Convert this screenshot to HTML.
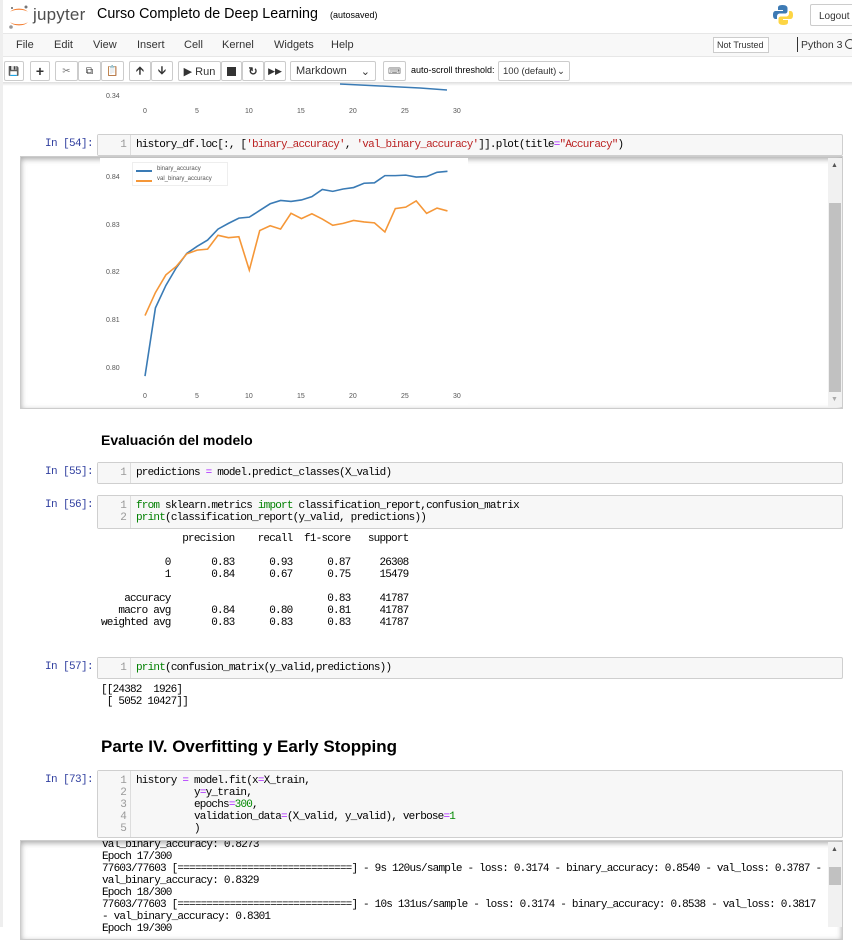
<!DOCTYPE html>
<html><head><meta charset="utf-8"><style>
*{box-sizing:border-box;margin:0;padding:0}
body{width:852px;height:927px;overflow:hidden;background:#fff;font-family:"Liberation Sans",Arial,sans-serif;position:relative;color:#000}
.a{position:absolute}
.mono{font-family:"Liberation Mono",monospace;font-size:11px;letter-spacing:-0.8px;white-space:pre;line-height:12px}
.btn{position:absolute;top:61px;height:20px;border:1px solid #ccc;background:#fff;border-radius:2px;font-size:11px;display:flex;align-items:center;justify-content:center;color:#333;white-space:nowrap}
.menu span{position:absolute;top:39px;font-size:11px;color:#333}
.prompt{position:absolute;left:30px;width:63px;text-align:right;color:#303f9f;font-family:"Liberation Mono",monospace;font-size:11px;letter-spacing:-0.6px}
.inbox{position:absolute;left:97px;width:746px;background:#f7f7f7;border:1px solid #cfcfcf;border-radius:2px}
.gut{position:absolute;left:0;top:0;bottom:0;width:33px;border-right:1px solid #ddd;background:#f7f7f7;color:#999;text-align:right;padding-right:4px;padding-top:4px}
.code{position:absolute;left:38px;top:4px;color:#000}
.k{color:#008000}.o{color:#aa22ff}.s{color:#ba2121}.n{color:#080}
.tick{position:absolute;font-size:7px;color:#555}
</style></head><body>
<div class="a" style="left:0;top:0;width:3px;height:927px;background:#eee"></div>
<svg class="a" style="left:7px;top:4px" width="24" height="26" viewBox="0 0 24 26">
<path d="M3 8 A10 6 0 0 1 21 8 A10 4 0 0 0 3 8Z" fill="#f37726"/>
<path d="M3 18 A10 6 0 0 0 21 18 A10 4 0 0 1 3 18Z" fill="#f37726"/>
<circle cx="19" cy="3" r="1.5" fill="#767677"/><circle cx="4" cy="23" r="1.8" fill="#989798"/><circle cx="5" cy="4" r="1" fill="#616262"/>
</svg>
<div class="a" style="left:33px;top:5px;font-size:17px;color:#4e4e4e;letter-spacing:0.2px">jupyter</div>
<div class="a" style="left:97px;top:6px;font-size:14.3px;color:#000">Curso Completo de Deep Learning</div>
<div class="a" style="left:330px;top:10px;font-size:9px;color:#000">(autosaved)</div>
<svg class="a" style="left:772px;top:4px" width="22" height="22" viewBox="0 0 22 22">
<path d="M10.5 1C6 1 6 3 6 4v2h5v1H3.5C1.5 7 1 9 1 11s.5 4 2.5 4H5v-2.5C5 10.5 6.5 9.5 8 9.5h5c1.5 0 2.5-1 2.5-2.5V4c0-1.5-1.5-3-5-3z" fill="#3d7ab4"/>
<path d="M11.5 21c4.5 0 4.5-2 4.5-3v-2h-5v-1h7.5c2 0 2.5-2 2.5-4s-.5-4-2.5-4H17v2.5c0 2-1.5 3-3 3H9c-1.5 0-2.5 1-2.5 2.5V18c0 1.5 1.5 3 5 3z" fill="#fdd544"/>
</svg>
<div class="a" style="left:810px;top:4px;width:46px;height:22px;border:1px solid #ccc;border-radius:2px;font-size:10px;padding:6px 0 0 8px;color:#333">Logout</div>
<div class="a" style="left:3px;top:33px;width:849px;height:24px;background:#f8f8f8;border-top:1px solid #e7e7e7;border-bottom:1px solid #e7e7e7"></div>
<div class="menu"><span style="left:16px">File</span><span style="left:54px">Edit</span><span style="left:93px">View</span><span style="left:137px">Insert</span><span style="left:184px">Cell</span><span style="left:222px">Kernel</span><span style="left:274px">Widgets</span><span style="left:331px">Help</span></div>
<div class="a" style="left:713px;top:37px;width:56px;height:16px;border:1px solid #ccc;background:#fff;font-size:9px;padding:2px 0 0 3px;color:#333;white-space:nowrap">Not Trusted</div>
<div class="a" style="left:797px;top:37px;width:1px;height:15px;background:#333"></div>
<div class="a" style="left:801px;top:39px;font-size:10.5px;color:#333">Python 3</div>
<div class="a" style="left:845px;top:39px;width:10px;height:10px;border:1.5px solid #333;border-radius:50%"></div>
<div class="btn" style="left:4px;width:20px;font-size:9px">&#128190;</div>
<div class="btn" style="left:30px;width:20px;font-weight:bold;font-size:14px">+</div>
<div class="btn" style="left:55px;width:23px;font-size:10px;color:#777">&#9986;</div>
<div class="btn" style="left:78px;width:23px;font-size:10px">&#10697;</div>
<div class="btn" style="left:101px;width:23px;font-size:10px">&#128203;</div>
<div class="btn" style="left:129px;width:22px;font-weight:bold">&#129129;</div>
<div class="btn" style="left:151px;width:22px;font-weight:bold">&#129131;</div>
<div class="btn" style="left:178px;width:43px">&#9654;&nbsp;Run</div>
<div class="btn" style="left:221px;width:21px"><span style="width:9px;height:9px;background:#333;display:block"></span></div>
<div class="btn" style="left:242px;width:22px;font-weight:bold">&#8635;</div>
<div class="btn" style="left:264px;width:22px;font-size:9px">&#9654;&#9654;</div>
<div class="btn" style="left:290px;width:86px;justify-content:space-between;padding:0 5px">Markdown<span>&#8964;</span></div>
<div class="btn" style="left:383px;width:23px;font-size:9px;color:#777">&#9000;</div>
<div class="a" style="left:411px;top:65px;font-size:9px;color:#000;white-space:nowrap">auto-scroll threshold:</div>
<div class="btn" style="left:498px;width:72px;justify-content:space-between;padding:0 4px;font-size:9.5px">100 (default)<span>&#8964;</span></div>
<div class="a" style="left:3px;top:82px;width:849px;height:4px;background:linear-gradient(#ddd,#fff)"></div>
<svg class="a" style="left:340px;top:83px" width="120" height="10"><path d="M0 1 L40 3 L60 4 L80 5 L107 7" stroke="#3a7bb5" stroke-width="1.5" fill="none"/></svg>
<div class="tick" style="left:106px;top:93px">0.34</div>
<div class="tick" style="left:143px;top:108px">0</div><div class="tick" style="left:195px;top:108px">5</div><div class="tick" style="left:245px;top:108px">10</div><div class="tick" style="left:297px;top:108px">15</div><div class="tick" style="left:349px;top:108px">20</div><div class="tick" style="left:401px;top:108px">25</div><div class="tick" style="left:453px;top:108px">30</div>
<div class="prompt" style="top:138px">In [54]:</div>
<div class="inbox" style="top:134px;height:22px"><div class="gut mono">1</div><div class="code mono">history_df.loc[:, [<span class="s">'binary_accuracy'</span>, <span class="s">'val_binary_accuracy'</span>]].plot(title<span class="o">=</span><span class="s">"Accuracy"</span>)</div></div>
<div class="a" style="left:20px;top:156px;width:823px;height:253px;border:1px solid #ccc;box-shadow:inset 0 2px 6px rgba(0,0,0,.35);background:#fff"></div>
<div class="a" style="left:100px;top:158px;width:368px;height:247px;background:#fff"></div>
<div class="a" style="left:828px;top:158px;width:14px;height:249px;background:#f1f1f1"></div>
<div class="a" style="left:829px;top:203px;width:12px;height:189px;background:#c1c1c1"></div>
<div class="a" style="left:831px;top:162px;font-size:7px;color:#555">&#9650;</div>
<div class="a" style="left:831px;top:396px;font-size:7px;color:#aaa">&#9660;</div>
<div class="a" style="left:132px;top:162px;width:96px;height:24px;border:1px solid #eee;background:#fff"></div>
<div class="a" style="left:136px;top:170px;width:16px;height:2px;background:#3a7bb5"></div>
<div class="a" style="left:136px;top:180px;width:16px;height:2px;background:#f59738"></div>
<div class="tick" style="left:157px;top:166px;font-size:6px">binary_accuracy</div>
<div class="tick" style="left:157px;top:176px;font-size:6px">val_binary_accuracy</div>
<div class="tick" style="left:106px;top:174px">0.84</div><div class="tick" style="left:106px;top:222px">0.83</div><div class="tick" style="left:106px;top:269px">0.82</div><div class="tick" style="left:106px;top:317px">0.81</div><div class="tick" style="left:106px;top:365px">0.80</div>
<div class="tick" style="left:143px;top:393px">0</div><div class="tick" style="left:195px;top:393px">5</div><div class="tick" style="left:245px;top:393px">10</div><div class="tick" style="left:297px;top:393px">15</div><div class="tick" style="left:349px;top:393px">20</div><div class="tick" style="left:401px;top:393px">25</div><div class="tick" style="left:453px;top:393px">30</div>
<svg class="a" style="left:0;top:0" width="852" height="927">
<g transform="translate(145,178) scale(10.43,-4775)">
<polyline vector-effect="non-scaling-stroke" fill="none" stroke="#3a7bb5" stroke-width="1.6" points="0,-0.0415 1,-0.0272 2,-0.0225 3,-0.0188 4,-0.0158 5,-0.0143 6,-0.013 7,-0.0107 8,-0.0095 9,-0.0084 10,-0.0082 11,-0.0068 12,-0.0054 13,-0.0047 14,-0.0049 15,-0.0046 16,-0.0039 17,-0.0024 18,-0.0028 19,-0.0023 20,-0.002 21,-0.0011 22,-0.001 23,0.0005 24,0.0005 25,0.0006 26,0.0002 27,0.0003 28,0.0012 29,0.0014"/>
<polyline vector-effect="non-scaling-stroke" fill="none" stroke="#f59738" stroke-width="1.6" points="0,-0.0288 1,-0.024 2,-0.0203 3,-0.0185 4,-0.0159 5,-0.0151 6,-0.0149 7,-0.012 8,-0.0125 9,-0.0123 10,-0.0193 11,-0.011 12,-0.01 13,-0.0107 14,-0.0074 15,-0.0085 16,-0.0075 17,-0.0086 18,-0.0099 19,-0.0095 20,-0.0089 21,-0.0092 22,-0.0094 23,-0.0113 24,-0.0064 25,-0.0061 26,-0.0048 27,-0.0074 28,-0.0063 29,-0.0069"/>
</g></svg>
<div class="a" style="left:101px;top:432px;font-size:14px;font-weight:bold">Evaluación del modelo</div>
<div class="prompt" style="top:466px">In [55]:</div>
<div class="inbox" style="top:462px;height:22px"><div class="gut mono">1</div><div class="code mono">predictions <span class="o">=</span> model.predict_classes(X_valid)</div></div>
<div class="prompt" style="top:499px">In [56]:</div>
<div class="inbox" style="top:495px;height:34px"><div class="gut mono">1
2</div><div class="code mono"><span class="k">from</span> sklearn.metrics <span class="k">import</span> classification_report,confusion_matrix
<span class="k">print</span>(classification_report(y_valid, predictions))</div></div>
<div class="a mono" style="left:101px;top:533px">              precision    recall  f1-score   support

           0       0.83      0.93      0.87     26308
           1       0.84      0.67      0.75     15479

    accuracy                           0.83     41787
   macro avg       0.84      0.80      0.81     41787
weighted avg       0.83      0.83      0.83     41787</div>
<div class="prompt" style="top:661px">In [57]:</div>
<div class="inbox" style="top:657px;height:22px"><div class="gut mono">1</div><div class="code mono"><span class="k">print</span>(confusion_matrix(y_valid,predictions))</div></div>
<div class="a mono" style="left:101px;top:684px">[[24382  1926]
 [ 5052 10427]]</div>
<div class="a" style="left:101px;top:737px;font-size:17px;font-weight:bold">Parte IV. Overfitting y Early Stopping</div>
<div class="prompt" style="top:774px">In [73]:</div>
<div class="a" style="left:99px;top:772px;font-size:6px;color:#aaa">&#9660;</div>
<div class="inbox" style="top:770px;height:68px"><div class="gut mono">1
2
3
4
5</div><div class="code mono">history <span class="o">=</span> model.fit(x<span class="o">=</span>X_train,
          y<span class="o">=</span>y_train,
          epochs<span class="o">=</span><span class="n">300</span>,
          validation_data<span class="o">=</span>(X_valid, y_valid), verbose<span class="o">=</span><span class="n">1</span>
          )</div></div>
<div class="a" style="left:20px;top:840px;width:823px;height:100px;border:1px solid #ccc;box-shadow:inset 0 2px 6px rgba(0,0,0,.35);background:#fff;overflow:hidden">
<div class="a mono" style="left:81px;top:-2px">val_binary_accuracy: 0.8273
Epoch 17/300
77603/77603 [==============================] - 9s 120us/sample - loss: 0.3174 - binary_accuracy: 0.8540 - val_loss: 0.3787 -
val_binary_accuracy: 0.8329
Epoch 18/300
77603/77603 [==============================] - 10s 131us/sample - loss: 0.3174 - binary_accuracy: 0.8538 - val_loss: 0.3817
- val_binary_accuracy: 0.8301
Epoch 19/300</div></div>
<div class="a" style="left:828px;top:842px;width:14px;height:85px;background:#f1f1f1"></div>
<div class="a" style="left:829px;top:867px;width:12px;height:18px;background:#c1c1c1"></div>
<div class="a" style="left:831px;top:846px;font-size:7px;color:#555">&#9650;</div>
</body></html>
